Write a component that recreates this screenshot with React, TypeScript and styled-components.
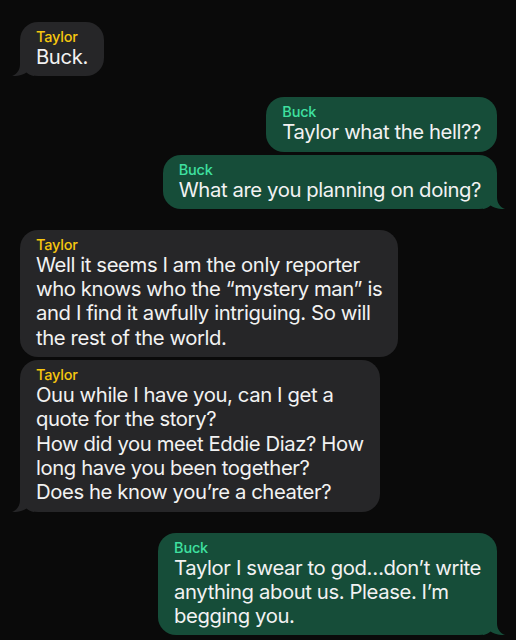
import * as React from "react";
import styled, {createGlobalStyle} from "styled-components";

const GlobalStyle = createGlobalStyle`
    html, body {
        margin: 0;
        padding: 0;
        background: #0a0a0a;
    }
    body {
        font-family: Inter, "Noto Sans", "Liberation Sans", sans-serif;
        -webkit-font-smoothing: antialiased;
    }
`;

type Side = "in" | "out";

const colors = {
    in: {bubble: "#262628", name: "#f6c70f"},
    out: {bubble: "#164d39", name: "#3fe0a0"},
};

const Thread = styled.div`
    display: flex;
    flex-direction: column;
    gap: 21px;
    padding: 22px 19px 6px 20px;
    width: 516px;
    height: 640px;
    box-sizing: border-box;
    overflow: hidden;
`;

const Group = styled.div`
    display: flex;
    flex-direction: column;
    gap: 3px;
`;

const Row = styled.div<{$side: Side}>`
    display: flex;
    justify-content: ${p => (p.$side === "in" ? "flex-start" : "flex-end")};
`;

const Bubble = styled.div<{$side: Side}>`
    position: relative;
    background: ${p => colors[p.$side].bubble};
    border-radius: 18px;
    padding: 6px 16px 7px 16px;
    color: #f2f2f2;
`;

const Name = styled.div<{$side: Side}>`
    font-size: 14.5px;
    line-height: 17px;
    font-weight: 500;
    letter-spacing: -0.2px;
    color: ${p => colors[p.$side].name};
`;

const Line = styled.div`
    font-size: 20.3px;
    line-height: 24.3px;
    letter-spacing: -0.4px;
    white-space: nowrap;
`;

const TailSvg = styled.svg<{$side: Side}>`
    position: absolute;
    bottom: 0;
    width: 22px;
    height: 22px;
    ${p => (p.$side === "in" ? "left: -8px;" : "right: -8px; transform: scaleX(-1);")}
`;

function Tail({side}: {side: Side}) {
    return (
        <TailSvg $side={side} viewBox="0 0 22 22">
            <path
                d="M8 0 L8 10 C8 16 5 20 0 22 C6 22.4 11 21 14.5 18.5 C16.5 20.5 19 21.6 22 22 L22 0 Z"
                fill={colors[side].bubble}
            />
        </TailSvg>
    );
}

interface Message {
    from: string;
    side: Side;
    lines: string[];
}

const groups: Message[][] = [
    [{from: "Taylor", side: "in", lines: ["Buck."]}],
    [
        {from: "Buck", side: "out", lines: ["Taylor what the hell??"]},
        {from: "Buck", side: "out", lines: ["What are you planning on doing?"]},
    ],
    [
        {
            from: "Taylor",
            side: "in",
            lines: [
                "Well it seems I am the only reporter",
                "who knows who the \u201cmystery man\u201d is",
                "and I find it awfully intriguing. So will",
                "the rest of the world.",
            ],
        },
        {
            from: "Taylor",
            side: "in",
            lines: [
                "Ouu while I have you, can I get a",
                "quote for the story?",
                "How did you meet Eddie Diaz? How",
                "long have you been together?",
                "Does he know you\u2019re a cheater?",
            ],
        },
    ],
    [
        {
            from: "Buck",
            side: "out",
            lines: [
                "Taylor I swear to god\u2026don\u2019t write",
                "anything about us. Please. I\u2019m",
                "begging you.",
            ],
        },
    ],
];

export default function App() {
    return (
        <>
            <GlobalStyle />
            <Thread>
                {groups.map((group, gi) => (
                    <Group key={gi}>
                        {group.map((msg, mi) => (
                            <Row $side={msg.side} key={mi}>
                                <Bubble $side={msg.side}>
                                    <Name $side={msg.side}>{msg.from}</Name>
                                    {msg.lines.map((line, li) => <Line key={li}>{line}</Line>)}
                                    {mi === group.length - 1 && <Tail side={msg.side} />}
                                </Bubble>
                            </Row>
                        ))}
                    </Group>
                ))}
            </Thread>
        </>
    );
}
